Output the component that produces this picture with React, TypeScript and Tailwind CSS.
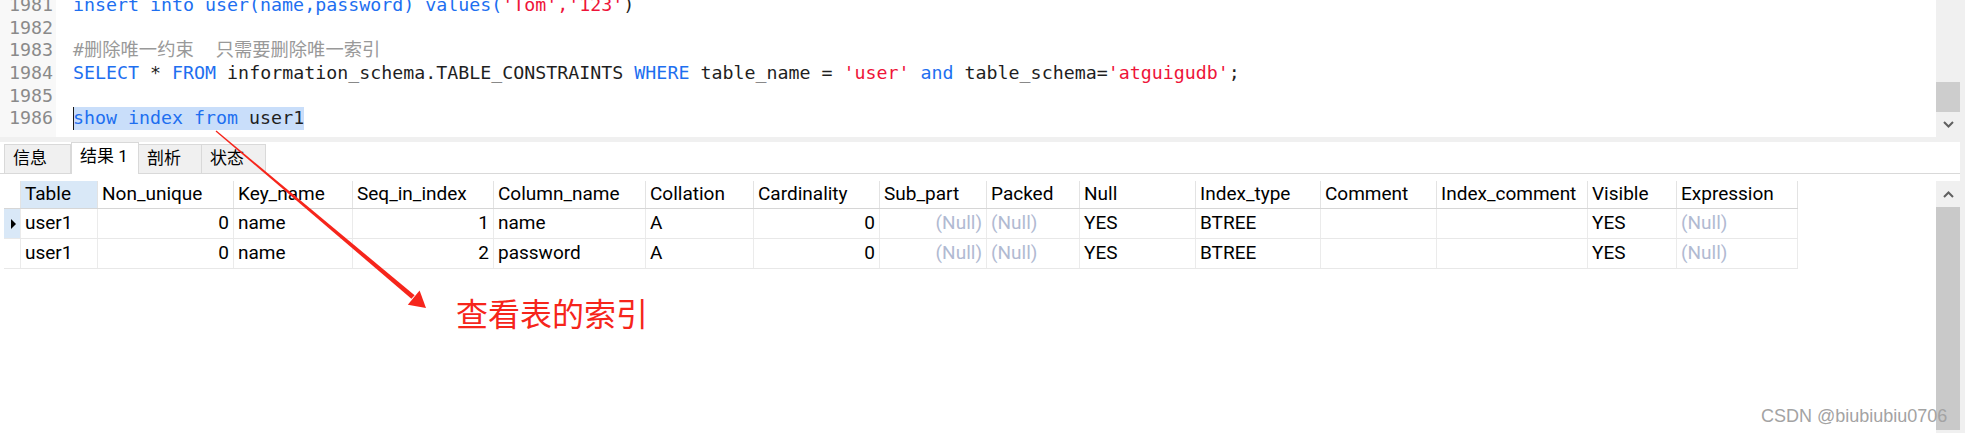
import clsx from "clsx";

const KW = "text-[#1e6ff0]";
const STR = "text-[#ee1439]";
const ID = "text-[#1f1f1f]";
const CMT = "text-[#999999]";

type Tok = [string, string];

const codeLines: { no: number; toks: Tok[]; selected?: boolean }[] = [
  {
    no: 1981,
    toks: [
      ["insert into user(name,password) values(", KW],
      ["'Tom','123'", STR],
      [")", ID],
    ],
  },
  { no: 1982, toks: [] },
  { no: 1983, toks: [["#删除唯一约束  只需要删除唯一索引", CMT]] },
  {
    no: 1984,
    toks: [
      ["SELECT", KW],
      [" * ", ID],
      ["FROM", KW],
      [" information_schema.TABLE_CONSTRAINTS ", ID],
      ["WHERE", KW],
      [" table_name = ", ID],
      ["'user'", STR],
      [" ", ID],
      ["and", KW],
      [" table_schema=", ID],
      ["'atguigudb'", STR],
      [";", ID],
    ],
  },
  { no: 1985, toks: [] },
  {
    no: 1986,
    selected: true,
    toks: [
      ["show index from ", KW],
      ["user1", ID],
    ],
  },
];

const columns = [
  { name: "Table", w: "w-[78px]" },
  { name: "Non_unique", w: "w-[136px]" },
  { name: "Key_name", w: "w-[119px]" },
  { name: "Seq_in_index", w: "w-[141px]" },
  { name: "Column_name", w: "w-[152px]" },
  { name: "Collation", w: "w-[108px]" },
  { name: "Cardinality", w: "w-[126px]" },
  { name: "Sub_part", w: "w-[107px]" },
  { name: "Packed", w: "w-[93px]" },
  { name: "Null", w: "w-[116px]" },
  { name: "Index_type", w: "w-[125px]" },
  { name: "Comment", w: "w-[116px]" },
  { name: "Index_comment", w: "w-[151px]" },
  { name: "Visible", w: "w-[89px]" },
  { name: "Expression", w: "w-[121px]" },
];

// [text, right aligned]
type Cell = [string, boolean];
const rows: Cell[][] = [
  [
    ["user1", false], ["0", true], ["name", false], ["1", true], ["name", false],
    ["A", false], ["0", true], ["(Null)", true], ["(Null)", false], ["YES", false],
    ["BTREE", false], ["", false], ["", false], ["YES", false], ["(Null)", false],
  ],
  [
    ["user1", false], ["0", true], ["name", false], ["2", true], ["password", false],
    ["A", false], ["0", true], ["(Null)", true], ["(Null)", false], ["YES", false],
    ["BTREE", false], ["", false], ["", false], ["YES", false], ["(Null)", false],
  ],
];

function Chevron({ up }: { up?: boolean }) {
  return (
    <svg width="11" height="7" viewBox="0 0 11 7">
      <polyline
        points={up ? "1,6 5.5,1.5 10,6" : "1,1 5.5,5.5 10,1"}
        fill="none"
        stroke="#606060"
        strokeWidth="2"
      />
    </svg>
  );
}

function Editor() {
  return (
    <div className="h-[137px] flex overflow-hidden font-['DejaVu_Sans_Mono','Noto_Sans_CJK_SC',monospace] text-[18.3px]">
      <div className="w-[56px] bg-[#f8f8f8] text-[#8a8a8a] pl-[9px]">
        <div className="-mt-[6px]">
          {codeLines.map((l) => (
            <div key={l.no} className="h-[22.7px] leading-[22.7px]">
              {l.no}
            </div>
          ))}
        </div>
      </div>
      <div className="flex-1 pl-[17px]">
        <div className="-mt-[6px]">
          {codeLines.map((l) => (
            <div key={l.no} className="h-[22.7px] leading-[22.7px] whitespace-pre">
              {l.selected ? (
                <span className="inline-block h-[22.7px] bg-[#c9defa] shadow-[inset_1px_0_0_#1a1a1a]">
                  {l.toks.map(([t, c], i) => (
                    <span key={i} className={c}>{t}</span>
                  ))}
                </span>
              ) : (
                l.toks.map(([t, c], i) => (
                  <span key={i} className={c}>{t}</span>
                ))
              )}
            </div>
          ))}
        </div>
      </div>
      <div className="w-[29px] bg-[#f0f0f0] flex flex-col">
        <div className="h-[82px]" />
        <div className="h-[30px] w-[24px] bg-[#cdcdcd]" />
        <div className="h-[25px] w-[24px] flex items-center justify-center">
          <Chevron />
        </div>
      </div>
    </div>
  );
}

function Tabs() {
  const tabs = [
    { label: "信息", w: "w-[67px]" },
    { label: "结果 1", w: "w-[68px]", active: true },
    { label: "剖析", w: "w-[64px]" },
    { label: "状态", w: "w-[65px]" },
  ];
  return (
    <div className="h-[39px]">
      <div className="h-[32px] flex items-end pl-[4px] border-b border-[#d9d9d9]">
        {tabs.map((t) => (
          <div
            key={t.label}
            className={clsx(
              "border-t border-l border-r border-[#d9d9d9] pl-[8px] flex items-center text-[17px] text-black",
              t.w,
              t.active ? "h-[32px] -mb-px bg-white pb-[4px]" : "h-[29px] bg-[#f0f0f0] -ml-px first:ml-0"
            )}
          >
            {t.label}
          </div>
        ))}
      </div>
    </div>
  );
}

function ResultTable() {
  return (
    <div className="flex-1 pl-[4px] text-[19px] text-black">
      <div className="flex h-[28px] border-b border-[#d6d6d6] w-[1794px]">
        <div className="w-[16px] h-full" />
        {columns.map((c, i) => (
          <div
            key={c.name}
            className={clsx(
              "h-full border-r border-[#e3e3e3] px-[4px] flex items-center whitespace-nowrap",
              c.w,
              i === 0 && "bg-[#d9e8f7] border-l"
            )}
          >
            {c.name}
          </div>
        ))}
      </div>
      {rows.map((r, ri) => (
        <div key={ri} className="flex h-[30px] border-b border-[#e8e8e8] w-[1794px]">
          <div
            className={clsx(
              "w-[16px] h-full flex items-center pl-[7px]",
              ri === 0 && "bg-[#d9e8f7]"
            )}
          >
            {ri === 0 && (
              <div className="w-0 h-0 border-y-[5px] border-y-transparent border-l-[5px] border-l-black" />
            )}
          </div>
          {r.map(([v, right], ci) => (
            <div
              key={ci}
              className={clsx(
                "h-full border-r border-[#ebebeb] px-[4px] flex items-center whitespace-nowrap overflow-hidden",
                columns[ci].w,
                ci === 0 && "border-l",
                right && "justify-end",
                v === "(Null)" && "text-[#b1bad2]"
              )}
            >
              {v}
            </div>
          ))}
        </div>
      ))}
    </div>
  );
}

function Results() {
  return (
    <div className="flex-1 flex font-['Roboto','Noto_Sans_CJK_SC',sans-serif]">
      <div className="flex-1 flex flex-col">
        <Tabs />
        <div className="flex-1 flex">
          <ResultTable />
          <div className="w-[24px] bg-[#f0f0f0] flex flex-col">
            <div className="h-[26px] flex items-center justify-center">
              <Chevron up />
            </div>
            <div className="h-[223px] bg-[#c9c9c9]" />
          </div>
        </div>
      </div>
      <div className="w-[5px] bg-[#f0f0f0]" />
    </div>
  );
}

export default function App() {
  return (
    <div className="relative w-[1965px] h-[433px] overflow-hidden bg-white flex flex-col">
      <Editor />
      <div className="h-[5px] bg-[#f0f0f0]" />
      <Results />

      {/* annotation */}
      <svg className="absolute inset-0 pointer-events-none" width="1965" height="433">
        <polygon
          points="215.6,131.4 216.4,130.6 414.6,295.2 411.4,298.8"
          fill="#f6251b"
        />
        <polygon points="419.6,290.6 407.8,304.8 426,308" fill="#f6251b" />
      </svg>
      <div className="absolute left-[456px] top-[296px] text-[32px] leading-none text-[#f6251b] font-['Noto_Sans_CJK_SC',sans-serif]">
        查看表的索引
      </div>
      <div className="absolute left-[1761px] top-[407px] text-[18px] leading-[18px] text-[#a3a3a3] font-['Liberation_Sans',sans-serif]">
        CSDN @biubiubiu0706
      </div>
    </div>
  );
}
